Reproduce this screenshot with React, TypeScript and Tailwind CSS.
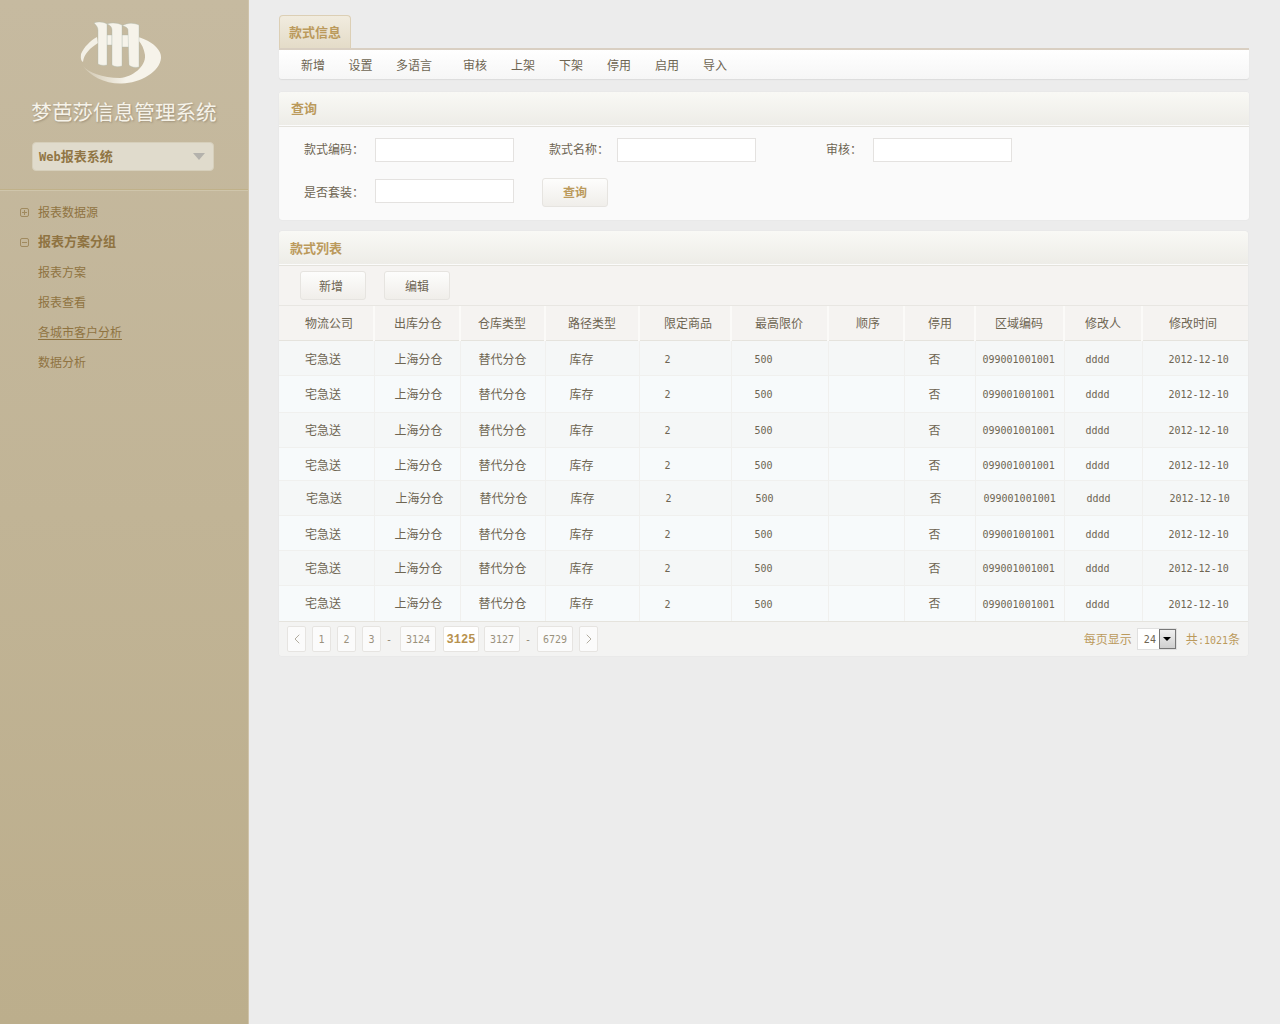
import { ChevronLeft, ChevronRight } from 'lucide-react';

const cjk = "font-['Noto_Sans_CJK_SC','Liberation_Sans',sans-serif]";
const mono = "font-['DejaVu_Sans_Mono',monospace] text-[10px]";

const toolbarItems = [
  { label: '新增', cls: 'w-[48px]' },
  { label: '设置', cls: 'w-[47px]' },
  { label: '多语言', cls: 'w-[60px] mr-[7px]' },
  { label: '审核', cls: 'w-[48px]' },
  { label: '上架', cls: 'w-[48px]' },
  { label: '下架', cls: 'w-[48px]' },
  { label: '停用', cls: 'w-[48px]' },
  { label: '启用', cls: 'w-[48px]' },
  { label: '导入', cls: 'w-[48px]' },
];

const columns = [
  { title: '物流公司', w: 'w-[95px]', head: 'pl-[26px]', cell: 'pl-[26px]' },
  { title: '出库分仓', w: 'w-[86px]', head: 'pl-[19px]', cell: 'pl-[20px]' },
  { title: '仓库类型', w: 'w-[85px]', head: 'pl-[17px]', cell: 'pl-[18px]' },
  { title: '路径类型', w: 'w-[94px]', head: 'pl-[22px]', cell: 'pl-[24px]' },
  { title: '限定商品', w: 'w-[92px]', head: 'pl-[24px]', cell: 'pl-[25px]' },
  { title: '最高限价', w: 'w-[97px]', head: 'pl-[23px]', cell: 'pl-[23px]' },
  { title: '顺序', w: 'w-[76px]', head: 'pl-[27px]', cell: 'pl-[28px]' },
  { title: '停用', w: 'w-[71px]', head: 'pl-[23px]', cell: 'pl-[24px]' },
  { title: '区域编码', w: 'w-[89px]', head: 'pl-[19px]', cell: 'pl-[7px]' },
  { title: '修改人', w: 'w-[78px]', head: 'pl-[20px]', cell: 'pl-[21px]' },
  { title: '修改时间', w: 'w-[106px]', head: 'pl-[26px]', cell: 'pl-[26px]' },
];

const rowValues = ['宅急送', '上海分仓', '替代分仓', '库存', '2', '500', '', '否', '099001001001', 'dddd', '2012-12-10'];
const latin = [4, 5, 8, 9, 10];

const rows = [
  { h: 'h-[35px]', bg: 'bg-[#f5f7f7]', text: 'pt-[2px]' },
  { h: 'h-[37px]', bg: 'bg-[#f7fafb]', text: '' },
  { h: 'h-[35px]', bg: 'bg-[#f5f7f7]', text: '' },
  { h: 'h-[33px]', bg: 'bg-[#f7fafb]', text: 'pt-[2px]' },
  { h: 'h-[35px]', bg: 'bg-[#f5f7f7]', text: 'translate-x-px' },
  { h: 'h-[35px]', bg: 'bg-[#f7fafb]', text: 'pt-[2px]' },
  { h: 'h-[35px]', bg: 'bg-[#f5f7f7]', text: '' },
  { h: 'h-[36px]', bg: 'bg-[#f7fafb]', text: '' },
];

const pages = [
  { t: 'prev', w: 'w-[19px] mr-[6px]' },
  { t: '1', w: 'w-[19px] mr-[6px]' },
  { t: '2', w: 'w-[19px] mr-[6px]' },
  { t: '3', w: 'w-[19px] mr-[5px]' },
  { t: '-', dash: true, w: 'w-[6px] mr-[8px]' },
  { t: '3124', w: 'w-[36px] mr-[7px]' },
  { t: '3125', w: 'w-[36px] mr-[5px]', active: true },
  { t: '3127', w: 'w-[36px] mr-[5px]' },
  { t: '-', dash: true, w: 'w-[6px] mr-[6px]' },
  { t: '6729', w: 'w-[36px] mr-[6px]' },
  { t: 'next', w: 'w-[19px]' },
];

function Logo() {
  return (
    <svg viewBox="80 20 82 65" className="w-[82px] h-[65px] mr-[6px]" aria-hidden="true">
      <defs>
        <linearGradient id="swoosh" gradientUnits="userSpaceOnUse" x1="84" y1="0" x2="126" y2="0">
          <stop offset="0" stopColor="#f6f3ea" stopOpacity="0.25" />
          <stop offset="1" stopColor="#f6f3ea" />
        </linearGradient>
      </defs>
      <path d="M138 37C152 41 162 50 161 58C160 72 140 83 122 83.5C105 84 90 76 83 66C88 72 102 78 120 78C132 77 146 67 145 55C144 49 142 44 138 40Z" fill="url(#swoosh)" />
      <path d="M97 37L98 43C90 48 84 54 83 62C80 60 81 56 81 54C84 47 90 41 97 37Z" fill="#f3f0e6" />
      <g fill="#f6f3ea" stroke="#a9b8ae" strokeWidth="0.35">
        <path d="M107 35H112V45H107Z" />
        <path d="M122 35H129V47H122Z" />
        <path d="M94 23C98 21 104 22 107 24L107 65C103 66 100 65 98 64L98 30C98 27 96 25 94 23Z" />
        <path d="M107 24C112 22 118 23 122 25L122 66C118 67 115 67 112 65L112 30C112 27 110 25 107 24Z" />
        <path d="M122 26C128 22 134 23 139 25L139 67C135 68 131 67 129 65L128 30C128 28 125 26 122 26Z" />
      </g>
    </svg>
  );
}

function Sidebar() {
  return (
    <aside className="w-[249px] shrink-0 min-h-[1024px] bg-gradient-to-b from-[#c6baa0] to-[#bcae8c] border-r border-[#cfc3aa]">
      <div className="h-[190px] flex flex-col items-center pt-[20px] border-b border-[#c0b189]">
        <Logo />
        <h1 className="mt-[12px] h-[28px] text-[20.6px] leading-[28px] text-[#f6f3ea] [text-shadow:1px_1px_2px_#9d9079] whitespace-nowrap">
          梦芭莎信息管理系统
        </h1>
        <div className="mt-[17px] w-[182px] h-[29px] ml-[-2px] flex items-center justify-between pl-[6px] pr-[8px] rounded-[4px] bg-[#e0dbcc] border border-[#d6cfbb]">
          <span className="pb-[2px] text-[13px] font-bold text-[#917645]">
            <span className="font-['DejaVu_Sans_Mono',monospace] text-[12px]">Web</span>报表系统
          </span>
          <span className="w-0 h-0 border-x-[6px] border-x-transparent border-t-[7px] border-t-[#b4b2ac]" />
        </div>
      </div>
      <nav className="border-t border-[#cfc5ab] pt-[6px] text-[12px] text-[#8f7341]">
        <div className="h-[30px] flex items-center pl-[20px]">
          <span className="w-[9px] h-[9px] mr-[9px] border border-[#a08a5f] rounded-[2px] relative">
            <span className="absolute left-[1px] right-[1px] top-[3px] h-px bg-[#a08a5f]" />
            <span className="absolute top-[1px] bottom-[1px] left-[3px] w-px bg-[#a08a5f]" />
          </span>
          报表数据源
        </div>
        <div className="h-[30px] flex items-center pl-[20px] text-[13px] font-bold">
          <span className="w-[9px] h-[9px] mr-[9px] border border-[#a08a5f] rounded-[2px] relative">
            <span className="absolute left-[1px] right-[1px] top-[3px] h-px bg-[#a08a5f]" />
          </span>
          <span className="pb-[2px]">报表方案分组</span>
        </div>
        <div className="h-[30px] flex items-center pl-[38px]">报表方案</div>
        <div className="h-[30px] flex items-center pl-[38px]">报表查看</div>
        <div className="h-[30px] flex items-center pl-[38px] underline underline-offset-2">各城市客户分析</div>
        <div className="h-[30px] flex items-center pl-[38px]">数据分析</div>
      </nav>
    </aside>
  );
}

function PanelHeader({ title, cls }: { title: string; cls: string }) {
  return (
    <div className={`${cls} h-[35px] flex items-center rounded-t-[3px] bg-gradient-to-b from-[#f9f9f5] to-[#edece7] border-b border-[#e4e2dc] shadow-[inset_0_-1px_0_#fbfbfb] text-[13px] font-bold text-[#bb9a5c]`}>
      {title}
    </div>
  );
}

function Field({ label, labelCls, inputCls = '' }: { label: string; labelCls: string; inputCls?: string }) {
  return (
    <>
      <span className={`${labelCls} pb-[2px] text-[12px] text-[#6e6552] whitespace-nowrap`}>{label}</span>
      <input className={`${inputCls} w-[139px] h-[24px] bg-white border border-[#e4e2e0] outline-none`} />
    </>
  );
}

function ActionButton({ label, cls }: { label: string; cls: string }) {
  return (
    <button className={`${cls} w-[66px] h-[29px] pt-[2px] rounded-[3px] border border-[#e6e4e0] bg-gradient-to-b from-[#fdfdfc] to-[#f0eeea] text-[12px]`}>
      {label}
    </button>
  );
}

function Pager() {
  return (
    <div className="h-[35px] flex items-center justify-between pl-[8px] pr-[8px] bg-[#f3f3f2] border-t border-[#e5e3dd]">
      <div className="flex items-center">
        {pages.map((p, i) =>
          p.dash ? (
            <span key={i} className={`${p.w} ${mono} text-center text-[#8d8470]`}>-</span>
          ) : (
            <span
              key={i}
              className={`${p.w} h-[26px] flex items-center justify-center bg-[#fbfbfb] border border-[#e6e4e1] rounded-[2px] ${
                p.active ? "bg-white pt-[2px] font-['Liberation_Mono',monospace] text-[12px] font-bold text-[#b8924f]" : `${mono} text-[#9a917d]`
              }`}
            >
              {p.t === 'prev' ? (
                <ChevronLeft size={16} strokeWidth={1} className="text-[#8d8470]" />
              ) : p.t === 'next' ? (
                <ChevronRight size={16} strokeWidth={1} className="text-[#8d8470]" />
              ) : (
                p.t
              )}
            </span>
          )
        )}
      </div>
      <div className="flex items-center text-[12px] text-[#bb9a5c]">
        <span>每页显示</span>
        <span className="ml-[5px] w-[40px] h-[22px] flex items-center justify-between bg-white border border-[#e0e0e0]">
          <span className={`pl-[6px] ${mono} text-[#6e6552]`}>24</span>
          <span className="w-[17px] h-[20px] flex items-center justify-center border border-[#777] bg-gradient-to-b from-[#f0f0f0] to-[#cfcfcf]">
            <span className="w-0 h-0 border-x-[4px] border-x-transparent border-t-[4px] border-t-black" />
          </span>
        </span>
        <span className="ml-[9px]">
          共<span className={mono}>:1021</span>条
        </span>
      </div>
    </div>
  );
}

export default function App() {
  return (
    <div className={`flex min-h-[1024px] bg-[#ececec] ${cjk}`}>
      <Sidebar />
      <main className="flex-1 pl-[30px] pr-[31px] pt-[15px]">
        <div className="flex">
          <div className="w-[72px] h-[33px] flex items-center justify-center rounded-t-[4px] border border-b-0 border-[#dccfb5] bg-gradient-to-b from-[#f1ecdf] to-[#e4dcc8] text-[13px] font-bold text-[#bb9a5c]">
            款式信息
          </div>
        </div>
        <div className="h-[31px] flex items-center pl-[10px] rounded-b-[3px] border-t-2 border-[#d9cfc2] bg-gradient-to-b from-white to-[#f6f6f6] shadow-[0_1px_1px_#dcdcdc] text-[12px] text-[#6e6552]">
          {toolbarItems.map((item) => (
            <span key={item.label} className={`${item.cls} text-center`}>{item.label}</span>
          ))}
        </div>

        <section className="mt-[13px] h-[128px] rounded-[3px] bg-[#fafafa] shadow-[0_0_1px_#d5d5d5]">
          <PanelHeader title="查询" cls="pl-[12px] pb-[2px]" />
          <div className="pl-[25px]">
            <div className="flex items-center pt-[11px]">
              <Field label="款式编码：" labelCls="w-[71px]" />
              <Field label="款式名称：" labelCls="ml-[35px] w-[68px]" />
              <Field label="审核：" labelCls="ml-[70px] w-[47px]" />
            </div>
            <div className="flex items-center mt-[16px]">
              <Field label="是否套装：" labelCls="w-[71px]" inputCls="mb-[3px]" />
              <button className="ml-[28px] w-[66px] h-[29px] pb-[2px] rounded-[3px] border border-[#e6e4e0] bg-gradient-to-b from-[#fdfdfc] to-[#f0eeea] text-[12px] font-bold text-[#bb9a5c]">
                查询
              </button>
            </div>
          </div>
        </section>

        <section className="mt-[11px] w-[969px] rounded-[3px] bg-[#f5f3f1] shadow-[0_0_1px_#d5d5d5] overflow-hidden text-[#6e6552]">
          <PanelHeader title="款式列表" cls="pl-[11px] pb-px" />
          <div className="h-[40px] flex items-center pl-[21px] pb-px border-b border-[#e8e6e2]">
            <ActionButton label="新增" cls="pr-[4px]" />
            <ActionButton label="编辑" cls="ml-[18px]" />
          </div>
          <table className="w-full table-fixed border-collapse text-[12px]">
            <colgroup>
              {columns.map((c) => (
                <col key={c.title} className={c.w} />
              ))}
            </colgroup>
            <thead>
              <tr className="h-[34px] bg-[#f5f3f1] border-b border-[#e5e3dd]">
                {columns.map((c) => (
                  <th key={c.title} className={`${c.head} text-left font-normal border-r-2 border-[#fbfaf8] last:border-r-0`}>
                    {c.title}
                  </th>
                ))}
              </tr>
            </thead>
            <tbody>
              {rows.map((r, i) => (
                <tr key={i} className={`${r.h} ${r.bg} border-b border-[#f0f0ee] last:border-b-0`}>
                  {rowValues.map((v, j) => (
                    <td key={j} className={`${columns[j].cell} p-0 border-r border-[#f0f0ee] last:border-r-0`}>
                      <span className={`block whitespace-nowrap ${r.text}`}>
                        <span className={latin.includes(j) ? `block pt-[2px] ${mono}` : ''}>{v}</span>
                      </span>
                    </td>
                  ))}
                </tr>
              ))}
            </tbody>
          </table>
          <Pager />
        </section>
      </main>
    </div>
  );
}
